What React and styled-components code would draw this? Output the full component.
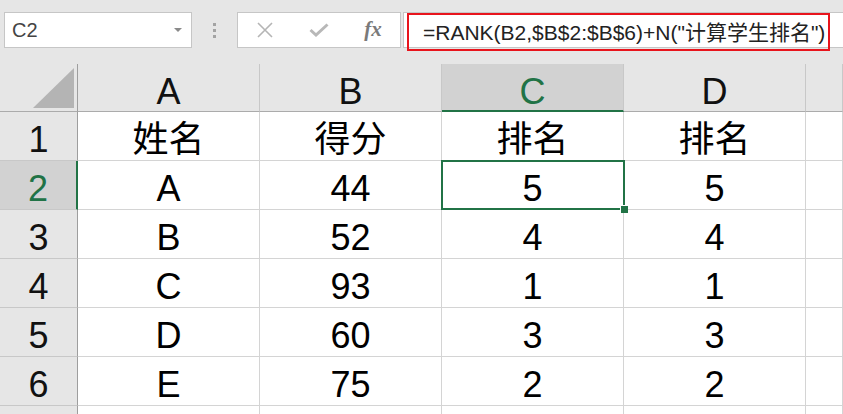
import React from "react";
import styled, { createGlobalStyle, css } from "styled-components";

const GlobalStyle = createGlobalStyle`
  body {
    margin: 0;
    padding: 0;
    background: #ffffff;
    font-family: "Liberation Sans", "Noto Sans CJK SC", sans-serif;
  }
`;

const green = "#217346";

const Window = styled.div`
  width: 843px;
  height: 414px;
  overflow: hidden;
  background: #e6e6e6;
`;

const Toolbar = styled.div`
  height: 64px;
  box-sizing: border-box;
  padding-top: 12px;
  display: flex;
  align-items: flex-start;
`;

const NameBox = styled.div`
  margin-left: 4px;
  width: 188px;
  height: 36px;
  box-sizing: border-box;
  background: #fff;
  border: 1px solid #c6c6c6;
  display: flex;
  align-items: center;
  justify-content: space-between;
  padding: 0 9px 0 7px;
  font-size: 20px;
  color: #444;
`;

const Caret = styled.span`
  width: 0;
  height: 0;
  border-left: 4px solid transparent;
  border-right: 4px solid transparent;
  border-top: 4px solid #8a8a8a;
`;

const Grip = styled.div`
  width: 45px;
  height: 36px;
  display: flex;
  flex-direction: column;
  align-items: center;
  justify-content: center;
  gap: 3px;
  span {
    width: 3px;
    height: 3px;
    background: #a3a3a3;
  }
`;

const FuncButtons = styled.div`
  width: 164px;
  height: 36px;
  box-sizing: border-box;
  background: #fff;
  border: 1px solid #c6c6c6;
  display: grid;
  grid-template-columns: repeat(3, 1fr);
  align-items: center;
  justify-items: center;
`;

const Fx = styled.span`
  font-family: "Liberation Serif", serif;
  font-style: italic;
  font-weight: bold;
  font-size: 21px;
  color: #7a7a7a;
  margin-top: -2px;
`;

const FormulaBar = styled.div`
  flex: 1;
  margin-left: 2px;
  height: 36px;
  box-sizing: border-box;
  background: #fff;
  border: 1px solid #c6c6c6;
  border-right: none;
  display: flex;
  align-items: flex-start;
`;

const Highlight = styled.div`
  margin: 0 0 0 3px;
  width: 423px;
  height: 38px;
  box-sizing: border-box;
  border: 2px solid #e8141c;
  display: flex;
  align-items: center;
  padding: 0 0 3px 14px;
  font-size: 21px;
  color: #222;
  white-space: nowrap;
`;

const Sheet = styled.div`
  display: grid;
  grid-template-columns: 78px repeat(4, 182px) 1fr;
  grid-template-rows: 48px repeat(7, 49px);
  background: #fff;
`;

const Cell = styled.div`
  position: relative;
  box-sizing: border-box;
  display: flex;
  justify-content: center;
  align-items: flex-start;
  padding-top: 8px;
  font-size: 36px;
  line-height: 40px;
  color: #000;
  border-right: 1px solid #d4d4d4;
  border-bottom: 1px solid #d4d4d4;
  ${(p) =>
    p.$active &&
    css`
      &::after {
        content: "";
        position: absolute;
        left: -1px;
        top: -1px;
        right: -2px;
        bottom: -1px;
        border: 2px solid ${green};
      }
      &::before {
        content: "";
        position: absolute;
        right: -5px;
        bottom: -4px;
        width: 7px;
        height: 7px;
        background: ${green};
        border-left: 1px solid #fff;
        border-top: 1px solid #fff;
        z-index: 2;
      }
    `}
`;

const ColHead = styled(Cell)`
  background: ${(p) => (p.$sel ? "#d2d2d2" : "#e6e6e6")};
  color: ${(p) => (p.$sel ? green : "#111")};
  border-right: 1px solid #c8c8c8;
  border-bottom: ${(p) => (p.$sel ? `2px solid ${green}` : "1px solid #ababab")};
`;

const RowHead = styled(Cell)`
  background: ${(p) => (p.$sel ? "#d2d2d2" : "#e6e6e6")};
  color: ${(p) => (p.$sel ? green : "#111")};
  border-right: ${(p) => (p.$sel ? `2px solid ${green}` : "1px solid #9e9e9e")};
  border-bottom: 1px solid #c8c8c8;
`;

const Corner = styled.div`
  box-sizing: border-box;
  background: #e6e6e6;
  border-right: 1px solid #9e9e9e;
  border-bottom: 1px solid #ababab;
  display: flex;
  justify-content: flex-end;
  align-items: flex-end;
  padding: 0 3px 3px 0;
`;

const Triangle = styled.div`
  width: 41px;
  height: 40px;
  background: #b4b4b4;
  clip-path: polygon(100% 0, 100% 100%, 0 100%);
`;

const columns = ["A", "B", "C", "D", ""];

const rows = [
  ["姓名", "得分", "排名", "排名"],
  ["A", "44", "5", "5"],
  ["B", "52", "4", "4"],
  ["C", "93", "1", "1"],
  ["D", "60", "3", "3"],
  ["E", "75", "2", "2"],
];

export default function App() {
  return (
    <Window>
      <GlobalStyle />
      <Toolbar>
        <NameBox>
          <span>C2</span>
          <Caret />
        </NameBox>
        <Grip>
          <span />
          <span />
          <span />
        </Grip>
        <FuncButtons>
          <svg width="18" height="16" viewBox="0 0 18 16">
            <path d="M2 1 L16 15 M16 1 L2 15" stroke="#b5b5b5" strokeWidth="1.6" fill="none" />
          </svg>
          <svg width="20" height="14" viewBox="0 0 20 14">
            <path d="M1.5 7 L7 12 L18.5 1.5" stroke="#b8b8b8" strokeWidth="3" fill="none" />
          </svg>
          <Fx>fx</Fx>
        </FuncButtons>
        <FormulaBar>
          <Highlight>=RANK(B2,$B$2:$B$6)+N("计算学生排名")</Highlight>
        </FormulaBar>
      </Toolbar>
      <Sheet>
        <Corner>
          <Triangle />
        </Corner>
        {columns.map((c) => (
          <ColHead key={"h" + c} $sel={c === "C"}>
            {c}
          </ColHead>
        ))}
        {rows.map((r, i) => (
          <React.Fragment key={i}>
            <RowHead $sel={i === 1}>{i + 1}</RowHead>
            {r.map((v, j) => (
              <Cell key={j} $active={i === 1 && j === 2}>
                {v}
              </Cell>
            ))}
            <Cell />
          </React.Fragment>
        ))}
        {/* row 7 is only a sliver at the bottom edge */}
        <RowHead />
        {columns.map((c) => (
          <Cell key={"r7" + c} />
        ))}
      </Sheet>
    </Window>
  );
}
